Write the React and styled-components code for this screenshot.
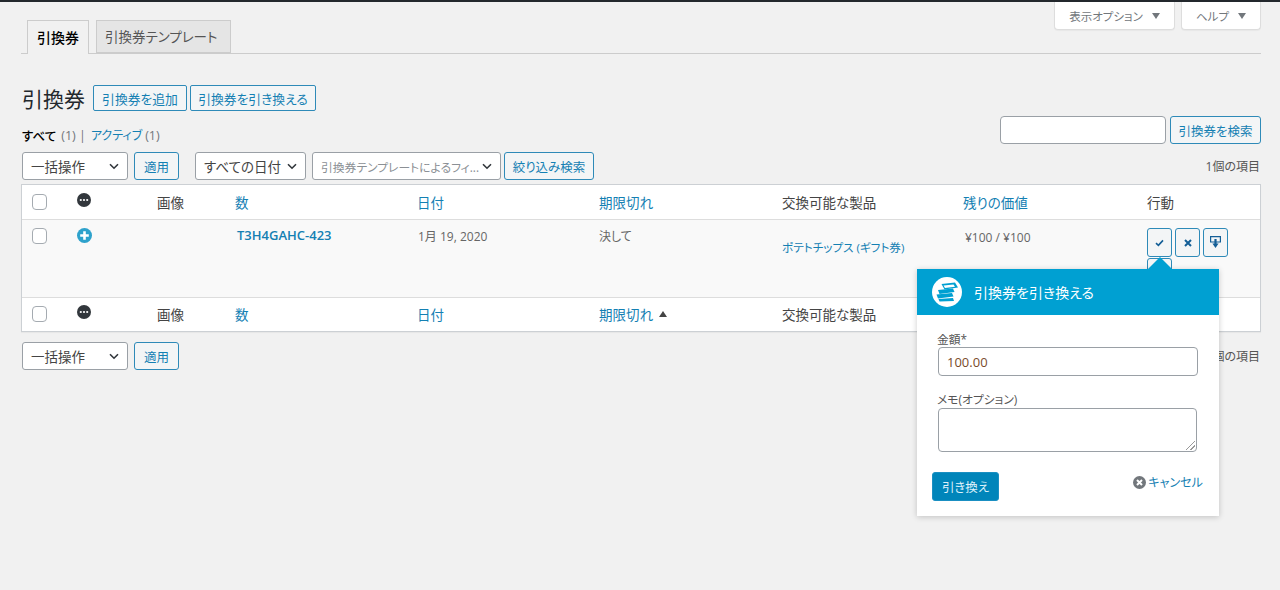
import styled, { createGlobalStyle } from 'styled-components'

const FONT = `"Open Sans", "Noto Sans CJK JP", sans-serif`
const BLUE = '#1480b3'
const EDGE = '#2e8ab8'
const DARK_ICON = '#135e96'

const GlobalStyle = createGlobalStyle`
    html, body {
        margin: 0;
        background: #f1f1f1;
    }
    body {
        font-family: ${FONT};
        font-size: 13px;
        font-feature-settings: "palt";
        color: #444;
        height: 590px;
        overflow: hidden;
    }
    * {
        box-sizing: border-box;
    }
    svg {
        flex-shrink: 0;
    }
`

//Top of the page
const TopBar = styled.div`
    height: 2px;
    background: #23282d;
`
const ScreenMeta = styled.div`
    display: flex;
    justify-content: flex-end;
    gap: 6px;
    height: 28px;
    padding-right: 19px;
`
const MetaButton = styled.div`
    width: ${props => props.$width}px;
    height: 28px;
    background: #fff;
    border: 1px solid #ddd;
    border-top: none;
    border-radius: 0 0 4px 4px;
    display: flex;
    align-items: center;
    justify-content: center;
    gap: 9px;
    color: #72777c;
    font-size: 11.5px;
    box-shadow: 0 1px 1px rgba(0,0,0,.04);
    &::after {
        content: '';
        border-left: 4px solid transparent;
        border-right: 4px solid transparent;
        border-top: 6px solid #72777c;
    }
`
const Wrap = styled.div`
    margin: 0 19px 0 22px;
`
const Tabs = styled.div`
    display: flex;
    height: 34px;
    margin-top: -10px;
    padding-left: 6px;
    gap: 7px;
    border-bottom: 1px solid #ccc;
    margin-left: -1px;
`
const Tab = styled.div`
    height: ${props => props.$active ? 34 : 33}px;
    padding: ${props => props.$active ? '0 9px 2px' : '0 13px 2px 8px'};
    display: flex;
    align-items: center;
    font-size: ${props => props.$active ? 14 : 13.5}px;
    font-weight: ${props => props.$active ? 500 : 400};
    border: 1px solid #ccc;
    border-bottom: ${props => props.$active ? 'none' : '1px solid #ccc'};
    background: ${props => props.$active ? '#f1f1f1' : '#e5e5e5'};
    color: ${props => props.$active ? '#000' : '#555'};
`
const HeadingRow = styled.div`
    display: flex;
    align-items: center;
    margin-top: 31px;
    height: 26px;
`
const Heading = styled.h1`
    margin: 0 8px 0 0;
    font-size: 21px;
    font-weight: 400;
    color: #23282d;
    font-feature-settings: normal;
`
const PageAction = styled.div`
    width: ${props => props.$width}px;
    height: 26px;
    margin-right: 3px;
    display: flex;
    align-items: center;
    justify-content: center;
    font-size: 12.8px;
    color: ${BLUE};
    background: #f3f5f6;
    border: 1px solid ${EDGE};
    border-radius: 2px;
`
const StatusSearchRow = styled.div`
    display: flex;
    justify-content: space-between;
    height: 36px;
    margin-top: 5px;
`
const Subsub = styled.div`
    display: flex;
    align-items: center;
    height: 30px;
    margin-top: 4px;
    font-size: 12.5px;
    color: #72777c;
    gap: 5px;
    a {
        color: ${BLUE};
        font-size: 12px;
        margin-right: -2px;
    }
    b {
        color: #000;
        font-weight: 500;
    }
`
const SearchBox = styled.div`
    display: flex;
    gap: 4px;
    height: 28px;
`
const TextBox = styled.div`
    background: #fff;
    border: 1px solid #9aa0a6;
    border-radius: 4px;
    width: ${props => props.$width}px;
    height: ${props => props.$height || 28}px;
    font-size: 14px;
    color: #32373c;
    padding: 0 8px;
    display: flex;
    align-items: center;
`
const Button = styled.div`
    height: 28px;
    width: ${props => props.$width}px;
    display: flex;
    align-items: center;
    justify-content: center;
    font-size: 12.5px;
    color: ${BLUE};
    background: #f3f5f6;
    border: 1px solid ${EDGE};
    border-radius: 3px;
    white-space: nowrap;
`
const TableNav = styled.div`
    display: flex;
    align-items: center;
    height: 28px;
    margin-top: ${props => props.$top || 0}px;
`
const Select = styled.div`
    width: ${props => props.$width}px;
    height: 28px;
    background: #fff;
    border: 1px solid #9aa0a6;
    border-radius: 3px;
    display: flex;
    align-items: center;
    justify-content: space-between;
    padding: 0 8px;
    margin-left: ${props => props.$left || 0}px;
    margin-right: ${props => props.$right || 0}px;
    font-size: ${props => props.$small ? 11.8 : 13.5}px;
    color: ${props => props.$small ? '#8b9095' : '#444'};
    white-space: nowrap;
    overflow: hidden;
`
const Count = styled.div`
    margin-left: auto;
    font-size: 12px;
    color: #555;
    padding-right: 1px;
`

//Table
const Table = styled.div`
    margin-top: 4px;
    margin-left: -1px;
    background: #fff;
    border: 1px solid #ccd0d4;
    box-shadow: 0 1px 1px rgba(0,0,0,.04);
`
const Row = styled.div`
    display: grid;
    grid-template-columns: 55px 80px 78px 182px 182px 183px 181px 184px 1fr;
    height: ${props => props.$height}px;
    padding-bottom: ${props => props.$body ? 0 : 1}px;
    align-items: ${props => props.$body ? 'start' : 'center'};
    background: ${props => props.$body ? '#f9f9f9' : '#fff'};
    border-top: ${props => props.$noTop ? 'none' : '1px solid #ddd'};
    font-size: 13.5px;
    color: #444;
`
const Cell = styled.div`
    padding-left: ${props => props.$left || 0}px;
    padding-top: ${props => props.$top || 0}px;
    font-size: ${props => props.$size || 13.5}px;
    color: ${props => props.$muted ? '#666' : 'inherit'};
    white-space: nowrap;
`
const SortLink = styled.span`
    color: ${BLUE};
`
const SortArrow = styled.span`
    display: inline-block;
    margin-left: 6px;
    vertical-align: 3px;
    border-left: 4px solid transparent;
    border-right: 4px solid transparent;
    border-bottom: 6px solid #444;
`
const CodeLink = styled.span`
    color: ${BLUE};
    font-weight: 600;
    font-size: 13px;
`
const Checkbox = styled.div`
    width: 15px;
    height: 16px;
    margin-left: 10px;
    background: #fff;
    border: 1px solid #a5abb1;
    border-radius: 4px;
`
const Actions = styled.div`
    display: flex;
    flex-wrap: wrap;
    gap: 1px 3px;
    width: 90px;
    padding-top: 8px;
`
const ActionButton = styled.div`
    width: 25px;
    height: 29px;
    display: flex;
    align-items: center;
    justify-content: center;
    background: #f3f5f6;
    border: 1px solid ${EDGE};
    border-radius: 3px;
`

//Popover over the row
const Popover = styled.div`
    position: absolute;
    left: 917px;
    top: 269px;
    width: 302px;
    height: 247px;
    background: #fff;
    box-shadow: 0 1px 6px rgba(0,0,0,.2);
    &::before {
        content: '';
        position: absolute;
        left: 231px;
        top: -12px;
        border-left: 12px solid transparent;
        border-right: 12px solid transparent;
        border-bottom: 12px solid #00a0d2;
    }
`
const PopoverHead = styled.div`
    height: 46px;
    background: #00a0d2;
    display: flex;
    align-items: center;
    gap: 12px;
    padding-left: 15px;
    color: #fff;
    font-size: 14px;
    font-weight: 400;
`
const TicketBadge = styled.div`
    width: 30px;
    height: 30px;
    border-radius: 50%;
    background: #fff;
    display: flex;
    align-items: center;
    justify-content: center;
`
const PopoverBody = styled.div`
    padding: 16px 21px 0 21px;
`
const Label = styled.div`
    font-size: 11.8px;
    line-height: 15px;
    padding-top: 1px;
    margin-left: -1px;
    color: #555;
    margin-bottom: ${props => props.$gap || 0}px;
`
const Amount = styled(TextBox)`
    margin-bottom: 15px;
    color: #7a4b2a;
    font-size: 13px;
    padding: 0 8px;
`
const Memo = styled(TextBox)`
    position: relative;
    &::after {
        content: '';
        position: absolute;
        right: 1px;
        bottom: 1px;
        width: 9px;
        height: 9px;
        background: linear-gradient(135deg, transparent 45%, #999 45%, #999 52%, transparent 52%, transparent 70%, #999 70%, #999 78%, transparent 78%);
    }
`
const PopoverFoot = styled.div`
    display: flex;
    justify-content: space-between;
    padding: 20px 16px 0 15px;
`
const RedeemButton = styled.div`
    width: 67px;
    height: 29px;
    background: #0085ba;
    border: 1px solid #1a8fc2;
    border-radius: 3px;
    color: #dff1fa;
    font-size: 12.5px;
    display: flex;
    align-items: center;
    justify-content: center;
`
const Cancel = styled.div`
    display: flex;
    align-items: center;
    gap: 2px;
    height: 20px;
    color: ${BLUE};
    font-size: 12.1px;
`

const Chevron = () => (
    <svg width="10" height="7" viewBox="0 0 10 7" fill="none">
        <path d="M1 1.2 5 5.2 9 1.2" stroke="#32373c" strokeWidth="1.6" />
    </svg>
)

const MoreIcon = () => (
    <svg width="14" height="14" viewBox="0 0 14 14">
        <circle cx="7" cy="7" r="7" fill="#32373c" />
        <circle cx="3.8" cy="7" r="1.1" fill="#fff" />
        <circle cx="7" cy="7" r="1.1" fill="#fff" />
        <circle cx="10.2" cy="7" r="1.1" fill="#fff" />
    </svg>
)

const PlusIcon = () => (
    <svg width="15" height="15" viewBox="0 0 15 15">
        <circle cx="7.5" cy="7.5" r="7.5" fill="#2ea2cc" />
        <path d="M7.5 3.2v8.6M3.2 7.5h8.6" stroke="#fff" strokeWidth="2.6" />
    </svg>
)

const CheckIcon = () => (
    <svg width="9" height="8" viewBox="0 0 9 8" fill="none">
        <path d="M1 4.2 3.4 6.4 8 1.4" stroke={DARK_ICON} strokeWidth="1.6" />
    </svg>
)

const CrossIcon = () => (
    <svg width="8" height="8" viewBox="0 0 8 8" fill="none">
        <path d="M1 1 7 7M7 1 1 7" stroke={DARK_ICON} strokeWidth="2" />
    </svg>
)

const PinIcon = () => (
    <svg width="11" height="13" viewBox="0 0 11 13">
        <path d="M.6.6H10.4V6H.6Z" fill="none" stroke={DARK_ICON} strokeWidth="1.2" />
        <path d="M4.4 3H6.6V7.4H8.6L5.5 12 2.4 7.4H4.4Z" fill={DARK_ICON} />
    </svg>
)

const TicketIcon = () => (
    <svg width="24" height="20" viewBox="0 0 24 20">
        <path d="M6.5 2 20 .5 23 5.5 9.5 7.5Z" fill="#00a0d2" />
        <path d="M8.5 3.5 18.5 2.5 20 4.8 10 6Z" fill="#fff" />
        <path d="M3 8 18 6.5 19.5 10 4.5 12Z" fill="#00a0d2" />
        <path d="M1.5 12.5 17 11 18.5 14.5 3 16.5Z" fill="#00a0d2" />
        <path d="M3.5 17 18 16 19 19 4.5 19.5Z" fill="#00a0d2" />
    </svg>
)

const CancelIcon = () => (
    <svg width="13" height="13" viewBox="0 0 13 13">
        <circle cx="6.5" cy="6.5" r="6.5" fill="#72777c" />
        <path d="M4 4 9 9M9 4 4 9" stroke="#fff" strokeWidth="2" />
    </svg>
)

const HeaderCells = ({ sorted }) => (
    <>
        <Cell><Checkbox /></Cell>
        <Cell><MoreIcon /></Cell>
        <Cell>画像</Cell>
        <Cell><SortLink>数</SortLink></Cell>
        <Cell><SortLink>日付</SortLink></Cell>
        <Cell><SortLink>期限切れ</SortLink>{sorted && <SortArrow />}</Cell>
        <Cell>交換可能な製品</Cell>
        <Cell><SortLink>残りの価値</SortLink></Cell>
        <Cell>行動</Cell>
    </>
)

const BulkActions = ({ top, children }) => (
    <TableNav $top={top}>
        <Select $width={106} $right={6}>一括操作<Chevron /></Select>
        <Button $width={45}>適用</Button>
        {children}
    </TableNav>
)

const App = () => {
    return (
        <>
            <GlobalStyle />
            <TopBar />
            <ScreenMeta>
                <MetaButton $width={121}>表示オプション</MetaButton>
                <MetaButton $width={80}>ヘルプ</MetaButton>
            </ScreenMeta>
            <Wrap>
                <Tabs>
                    <Tab $active>引換券</Tab>
                    <Tab>引換券テンプレート</Tab>
                </Tabs>
                <HeadingRow>
                    <Heading>引換券</Heading>
                    <PageAction $width={94}>引換券を追加</PageAction>
                    <PageAction $width={126}>引換券を引き換える</PageAction>
                </HeadingRow>
                <StatusSearchRow>
                    <Subsub>
                        <b>すべて</b> (1) | <a>アクティブ</a> (1)
                    </Subsub>
                    <SearchBox>
                        <TextBox $width={166} />
                        <Button $width={91}>引換券を検索</Button>
                    </SearchBox>
                </StatusSearchRow>
                <BulkActions>
                    <Select $width={111} $left={16} $right={6}>すべての日付<Chevron /></Select>
                    <Select $width={189} $right={3} $small>引換券テンプレートによるフィ...<Chevron /></Select>
                    <Button $width={90}>絞り込み検索</Button>
                    <Count>1個の項目</Count>
                </BulkActions>
                <Table>
                    <Row $height={34} $noTop><HeaderCells /></Row>
                    <Row $height={78} $body>
                        <Cell $top={8}><Checkbox /></Cell>
                        <Cell $top={8}><PlusIcon /></Cell>
                        <Cell />
                        <Cell $top={6} $left={2}><CodeLink>T3H4GAHC-423</CodeLink></Cell>
                        <Cell $top={7} $left={1} $size={12} $muted>1月 19, 2020</Cell>
                        <Cell $top={7} $size={12} $muted>決して</Cell>
                        <Cell $top={19} $size={11.6}><SortLink>ポテトチップス (ギフト券)</SortLink></Cell>
                        <Cell $top={9} $left={2} $size={12} $muted>¥100 / ¥100</Cell>
                        <Actions>
                            <ActionButton><CheckIcon /></ActionButton>
                            <ActionButton><CrossIcon /></ActionButton>
                            <ActionButton><PinIcon /></ActionButton>
                            <ActionButton />
                        </Actions>
                    </Row>
                    <Row $height={34}><HeaderCells sorted /></Row>
                </Table>
                <BulkActions top={10}>
                    <Count>1個の項目</Count>
                </BulkActions>
            </Wrap>
            <Popover>
                <PopoverHead>
                    <TicketBadge><TicketIcon /></TicketBadge>
                    引換券を引き換える
                </PopoverHead>
                <PopoverBody>
                    <Label>金額*</Label>
                    <Amount $width={260} $height={29}>100.00</Amount>
                    <Label $gap={1}>メモ(オプション)</Label>
                    <Memo $width={259} $height={44} />
                </PopoverBody>
                <PopoverFoot>
                    <RedeemButton>引き換え</RedeemButton>
                    <Cancel><CancelIcon />キャンセル</Cancel>
                </PopoverFoot>
            </Popover>
        </>
    );
}

export default App;
